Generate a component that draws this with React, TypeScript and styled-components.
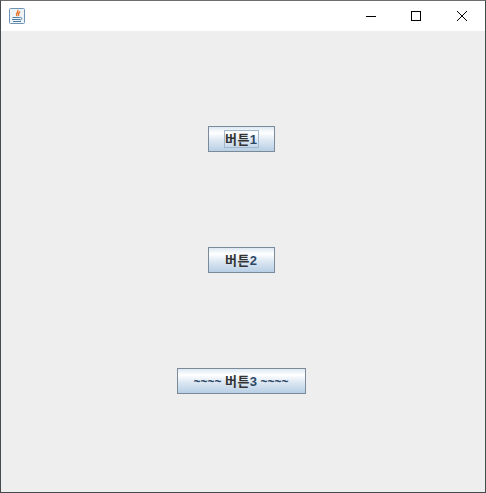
import React from "react";
import styled, { createGlobalStyle } from "styled-components";

const Global = createGlobalStyle`
  html, body { margin: 0; padding: 0; background: #eeeeee; }
  #root { width: 486px; height: 493px; }
`;

const Frame = styled.div`
  box-sizing: border-box;
  width: 486px;
  height: 493px;
  display: flex;
  flex-direction: column;
  border: 1px solid #444a4e;
  border-top-color: #6e6e6e;
  background: #eeeeee;
`;

const TitleBar = styled.div`
  height: 30px;
  flex: none;
  display: flex;
  align-items: center;
  background: #ffffff;
`;

const AppIcon = styled.svg`
  width: 16px;
  height: 16px;
  margin-left: 8px;
  flex: none;
`;

const Controls = styled.div`
  margin-left: auto;
  display: flex;
`;

const Control = styled.div`
  width: 46px;
  height: 30px;
  display: flex;
  align-items: center;
  justify-content: center;
`;

const MinimizeControl = styled(Control)`
  padding-left: 2px;
  box-sizing: border-box;
`;

const Content = styled.div`
  flex: 1;
  display: flex;
  flex-direction: column;
  align-items: center;
  gap: 95px;
  padding: 95px 3px 0 0;
`;

const Button = styled.div<{ $wide?: boolean }>`
  box-sizing: border-box;
  width: ${(p) => (p.$wide ? "129px" : "67px")};
  height: 26px;
  display: flex;
  align-items: center;
  justify-content: center;
  border: 1px solid #7a8a99;
  background: linear-gradient(to bottom, #dde8f3 0, #ffffff 25%, #dde8f3 55%, #b8cfe5 100%);
  font: bold 13px "Liberation Sans", "Noto Sans CJK KR", sans-serif;
  color: #2c4866;
`;

const Focus = styled.span<{ $on?: boolean }>`
  display: block;
  box-sizing: border-box;
  height: 18px;
  width: fit-content;
  padding-right: 1px;
  line-height: 16px;
  white-space: pre;
  border: 1px solid ${(p) => (p.$on ? "#a3b8cc" : "transparent")};
`;

const Hangul = styled.span`
  font-family: "Noto Sans CJK KR", sans-serif;
  letter-spacing: 0.5px;
  color: #333333;
`;

const Tilde = styled.span`
  font-size: 12px;
`;

export default function App() {
  return (
    <Frame>
      <Global />
      <TitleBar>
        <AppIcon viewBox="0 0 16 16">
          <rect x="0.5" y="0.5" width="15" height="15" rx="1" fill="#eef3f8" stroke="#6f93b3" />
          <path d="M8.5 2 C10.5 4 6 5 7.8 8 M11 3.5 C9.5 5 8.5 6 9.8 8" fill="none" stroke="#e8742a" strokeWidth="1.4" />
          <path d="M3.5 9.5 H10.5 M3 11.5 H11 M4 13.5 H12 M10.5 9.5 C13.5 9 13.5 11.5 11 12" fill="none" stroke="#4f7ea3" strokeWidth="1" />
        </AppIcon>
        <Controls>
          <MinimizeControl>
            <svg width="10" height="10" viewBox="0 0 10 10"><path d="M0 5.5 H10" stroke="#000" /></svg>
          </MinimizeControl>
          <Control>
            <svg width="10" height="10" viewBox="0 0 10 10"><rect x="0.5" y="0.5" width="9" height="9" fill="none" stroke="#000" /></svg>
          </Control>
          <Control>
            <svg width="10" height="10" viewBox="0 0 10 10"><path d="M0 0 L10 10 M10 0 L0 10" stroke="#000" /></svg>
          </Control>
        </Controls>
      </TitleBar>
      <Content>
        <Button><Focus $on><Hangul>버튼</Hangul>1</Focus></Button>
        <Button><Focus><Hangul>버튼</Hangul>2</Focus></Button>
        <Button $wide><Focus><Tilde>~~~~ </Tilde><Hangul>버튼</Hangul>3<Tilde> ~~~~</Tilde></Focus></Button>
      </Content>
    </Frame>
  );
}
